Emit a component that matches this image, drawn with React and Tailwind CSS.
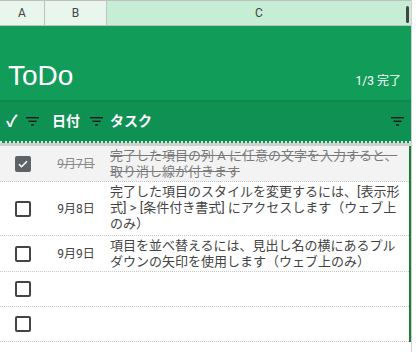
import React from "react";

const font = { fontFamily: '"Roboto", "Noto Sans CJK JP", sans-serif' };

const FilterIcon = () => (
  <svg width="13" height="9" viewBox="0 0 13 9" className="shrink-0">
    <rect x="0" y="0" width="13" height="1.4" fill="#1b1b1b" />
    <rect x="2.5" y="3.6" width="8" height="1.4" fill="#1b1b1b" />
    <rect x="5" y="7.2" width="3" height="1.4" fill="#1b1b1b" />
  </svg>
);

const CheckBox = ({ checked }) =>
  checked ? (
    <div className="w-[16px] h-[16px] rounded-[2px] bg-[#5f6368] flex items-center justify-center">
      <svg width="12" height="12" viewBox="0 0 24 24">
        <path d="M4 12.5l5 5L20 6.5" fill="none" stroke="#fff" strokeWidth="3" />
      </svg>
    </div>
  ) : (
    <div className="w-[16px] h-[16px] rounded-[2px] border-2 border-[#444]" />
  );

const rows = [
  {
    done: true,
    date: "9月7日",
    lines: ["完了した項目の列 A に任意の文字を入力すると、", "取り消し線が付きます"],
    h: "h-[36px]",
  },
  {
    date: "9月8日",
    lines: [
      "完了した項目のスタイルを変更するには、[表示形",
      "式] > [条件付き書式] にアクセスします（ウェブ上",
      "のみ）",
    ],
    h: "h-[54px]",
  },
  {
    date: "9月9日",
    lines: ["項目を並べ替えるには、見出し名の横にあるプル", "ダウンの矢印を使用します（ウェブ上のみ）"],
    h: "h-[36px]",
  },
  { date: "", lines: [], h: "h-[35px]" },
  { date: "", lines: [], h: "h-[35px]" },
];

export default function App() {
  return (
    <div className="w-[416px] h-[352px] bg-white overflow-hidden flex" style={font}>
      <div className="w-[411px] flex flex-col">
        {/* column letters */}
        <div className="flex h-[26px] border-t border-b border-[#c0c0c0] text-[12px] text-[#444]">
          <div className="w-[45px] bg-[#e8f6ed] border-r border-[#c0c0c0] flex items-center justify-center">A</div>
          <div className="w-[62px] bg-[#e8f6ed] border-r border-[#c0c0c0] flex items-center justify-center">B</div>
          <div className="flex-1 bg-[#c6eed5] flex items-center justify-center relative">
            C
            <div className="absolute right-[2px] top-[5px] w-[3px] h-[17px] rounded-sm bg-[#444]" />
          </div>
        </div>

        {/* title banner */}
        <div className="h-[76px] bg-[#129c59] border-b-2 border-[#0e8a4d] flex items-end justify-between px-[8px] pb-[8px] text-white">
          <span className="text-[28px] leading-[32px]" style={{ fontFamily: '"Liberation Sans", sans-serif' }}>ToDo</span>
          <span className="text-[12px] mb-[2px] mr-[2px]">1/3 完了</span>
        </div>

        {/* header row */}
        <div className="h-[41px] bg-[#0f9153] border-b-2 border-dotted border-[#d8efe0] flex items-center text-white font-bold text-[14px]">
          <div className="w-[45px] flex items-center pl-[6px] gap-[8px]">
            <span className="text-[16px]">✓</span>
            <FilterIcon />
          </div>
          <div className="w-[62px] flex items-center pl-[7px] gap-[10px]">
            <span>日付</span>
            <FilterIcon />
          </div>
          <div className="flex-1 flex items-center justify-between pl-[3px] pr-[7px]">
            <span>タスク</span>
            <FilterIcon />
          </div>
        </div>
        <div className="h-[3px] bg-[#d0d0d0]" />

        {/* task rows */}
        <div className="border-r-2 border-[#188038]">
          {rows.map((r, i) => (
            <div
              key={i}
              className={`flex ${r.h} border-b border-dotted border-[#c8c8c8] ${r.done ? "bg-[#f3f3f3]" : "bg-white"}`}
            >
              <div className="w-[45px] flex items-center justify-center">
                <CheckBox checked={r.done} />
              </div>
              <div
                className={`w-[62px] flex items-center justify-center text-[12px] ${
                  r.done ? "text-[#888] line-through" : "text-[#444]"
                }`}
              >
                {r.date}
              </div>
              <div
                className={`flex-1 pl-[3px] py-[2px] text-[13px] leading-[16px] ${
                  r.done ? "text-[#7a7a7a] line-through" : "text-[#444]"
                }`}
              >
                {r.lines.map((l, j) => (
                  <div key={j} className="whitespace-nowrap">
                    {l}
                  </div>
                ))}
              </div>
            </div>
          ))}
        </div>
      </div>
      <div className="flex-1 border-l border-[#d0d0d0] bg-white" />
    </div>
  );
}
